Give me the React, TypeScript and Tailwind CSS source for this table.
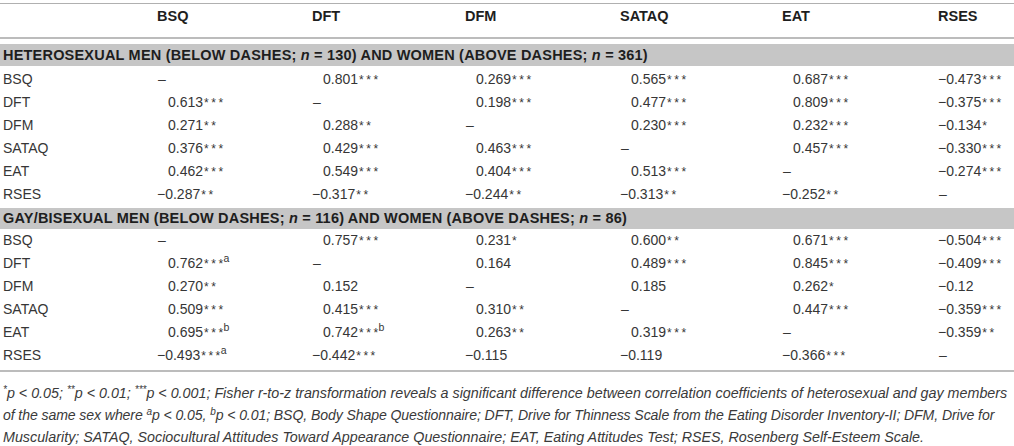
import React from "react";

type Cell = string;

const cols = ["BSQ", "DFT", "DFM", "SATAQ", "EAT", "RSES"];

const sec1: [string, Cell[]][] = [
  ["BSQ", ["–", "0.801***", "0.269***", "0.565***", "0.687***", "−0.473***"]],
  ["DFT", ["0.613***", "–", "0.198***", "0.477***", "0.809***", "−0.375***"]],
  ["DFM", ["0.271**", "0.288**", "–", "0.230***", "0.232***", "−0.134*"]],
  ["SATAQ", ["0.376***", "0.429***", "0.463***", "–", "0.457***", "−0.330***"]],
  ["EAT", ["0.462***", "0.549***", "0.404***", "0.513***", "–", "−0.274***"]],
  ["RSES", ["−0.287**", "−0.317**", "−0.244**", "−0.313**", "−0.252**", "–"]],
];

const sec2: [string, Cell[]][] = [
  ["BSQ", ["–", "0.757***", "0.231*", "0.600**", "0.671***", "−0.504***"]],
  ["DFT", ["0.762***a", "–", "0.164", "0.489***", "0.845***", "−0.409***"]],
  ["DFM", ["0.270**", "0.152", "–", "0.185", "0.262*", "−0.12"]],
  ["SATAQ", ["0.509***", "0.415***", "0.310**", "–", "0.447***", "−0.359***"]],
  ["EAT", ["0.695***b", "0.742***b", "0.263**", "0.319***", "–", "−0.359**"]],
  ["RSES", ["−0.493***a", "−0.442***", "−0.115", "−0.119", "−0.366***", "–"]],
];

const grid = "grid grid-cols-[157px_155px_153px_155px_162px_156px_76px]";

function Value({ v }: { v: string }) {
  if (v === "–") {
    return <span className="pl-[1px]">–</span>;
  }
  const m = v.match(/^(−?)([0-9.]+)(\**)([ab]?)$/);
  if (!m) return <span>{v}</span>;
  const [, neg, num, stars, sup] = m;
  return (
    <span className={neg ? "" : "pl-[11px]"}>
      {neg}
      {num}
      {stars && <span className="tracking-[2.5px] text-[12px] pl-[1px]">{stars}</span>}
      {sup && <sup className="text-[10.5px] -top-[6px] -ml-[2px]">{sup}</sup>}
    </span>
  );
}

function Rows({ rows }: { rows: [string, Cell[]][] }) {
  return (
    <div className="flex flex-col">
      {rows.map(([label, vals]) => (
        <div key={label} className={`${grid} h-[23px] items-center`}>
          <div className="pl-[3px]">{label}</div>
          {vals.map((v, i) => (
            <div key={i} className="whitespace-nowrap">
              <Value v={v} />
            </div>
          ))}
          <div />
        </div>
      ))}
    </div>
  );
}

function Band({ children, h }: { children: React.ReactNode; h: string }) {
  return (
    <div
      className={`bg-[#c6c6c6] ${h} flex items-center pl-[3px] font-bold text-[#1e1e1e] text-[14.5px] tracking-[0.2px] whitespace-nowrap`}
    >
      <span>{children}</span>
    </div>
  );
}

const S = ({ children }: { children: React.ReactNode }) => (
  <sup className="text-[10px] -top-[5px]">{children}</sup>
);

export default function App() {
  return (
    <div
      className="w-[1014px] h-[446px] bg-white text-[#363636] text-[14px] leading-none overflow-hidden"
      style={{ fontFamily: '"Liberation Sans", Arial, sans-serif' }}
    >
      <div className="pt-[3px]">
        <div
          className={`${grid} border-t border-[#b0b0b0] border-b-2 border-b-[#bcbcbc] h-[36px] items-center font-bold text-[14.5px] text-[#1e1e1e]`}
        >
          <div />
          {cols.map((c) => (
            <div key={c}>{c}</div>
          ))}
          <div />
        </div>
        <div className="h-[5px]" />
        <Band h="h-[22px]">
          HETEROSEXUAL MEN (BELOW DASHES; <i>n</i> = 130) AND WOMEN (ABOVE DASHES; <i>n</i> = 361)
        </Band>
        <div className="h-[4px]" />
        <Rows rows={sec1} />
        <Band h="h-[21px]">
          GAY/BISEXUAL MEN (BELOW DASHES; <i>n</i> = 116) AND WOMEN (ABOVE DASHES; <i>n</i> = 86)
        </Band>
        <div className="h-[2px]" />
        <Rows rows={sec2} />
        <div className="h-[3px] border-b-2 border-[#bcbcbc]" />
        <div className="pt-[10px] pl-[3px] italic text-[14.3px] leading-[22px] text-[#3a3a3a] whitespace-nowrap">
          <div>
            <S>*</S>p &lt; 0.05; <S>**</S>p &lt; 0.01; <S>***</S>p &lt; 0.001; Fisher r-to-z transformation reveals a
            significant difference between correlation coefficients of heterosexual and gay members
          </div>
          <div className="text-[14.1px] tracking-[-0.1px]">
            of the same sex where <S>a</S>p &lt; 0.05, <S>b</S>p &lt; 0.01; BSQ, Body Shape Questionnaire; DFT, Drive
            for Thinness Scale from the Eating Disorder Inventory-II; DFM, Drive for
          </div>
          <div>
            Muscularity; SATAQ, Sociocultural Attitudes Toward Appearance Questionnaire; EAT, Eating Attitudes Test;
            RSES, Rosenberg Self-Esteem Scale.
          </div>
        </div>
      </div>
    </div>
  );
}
